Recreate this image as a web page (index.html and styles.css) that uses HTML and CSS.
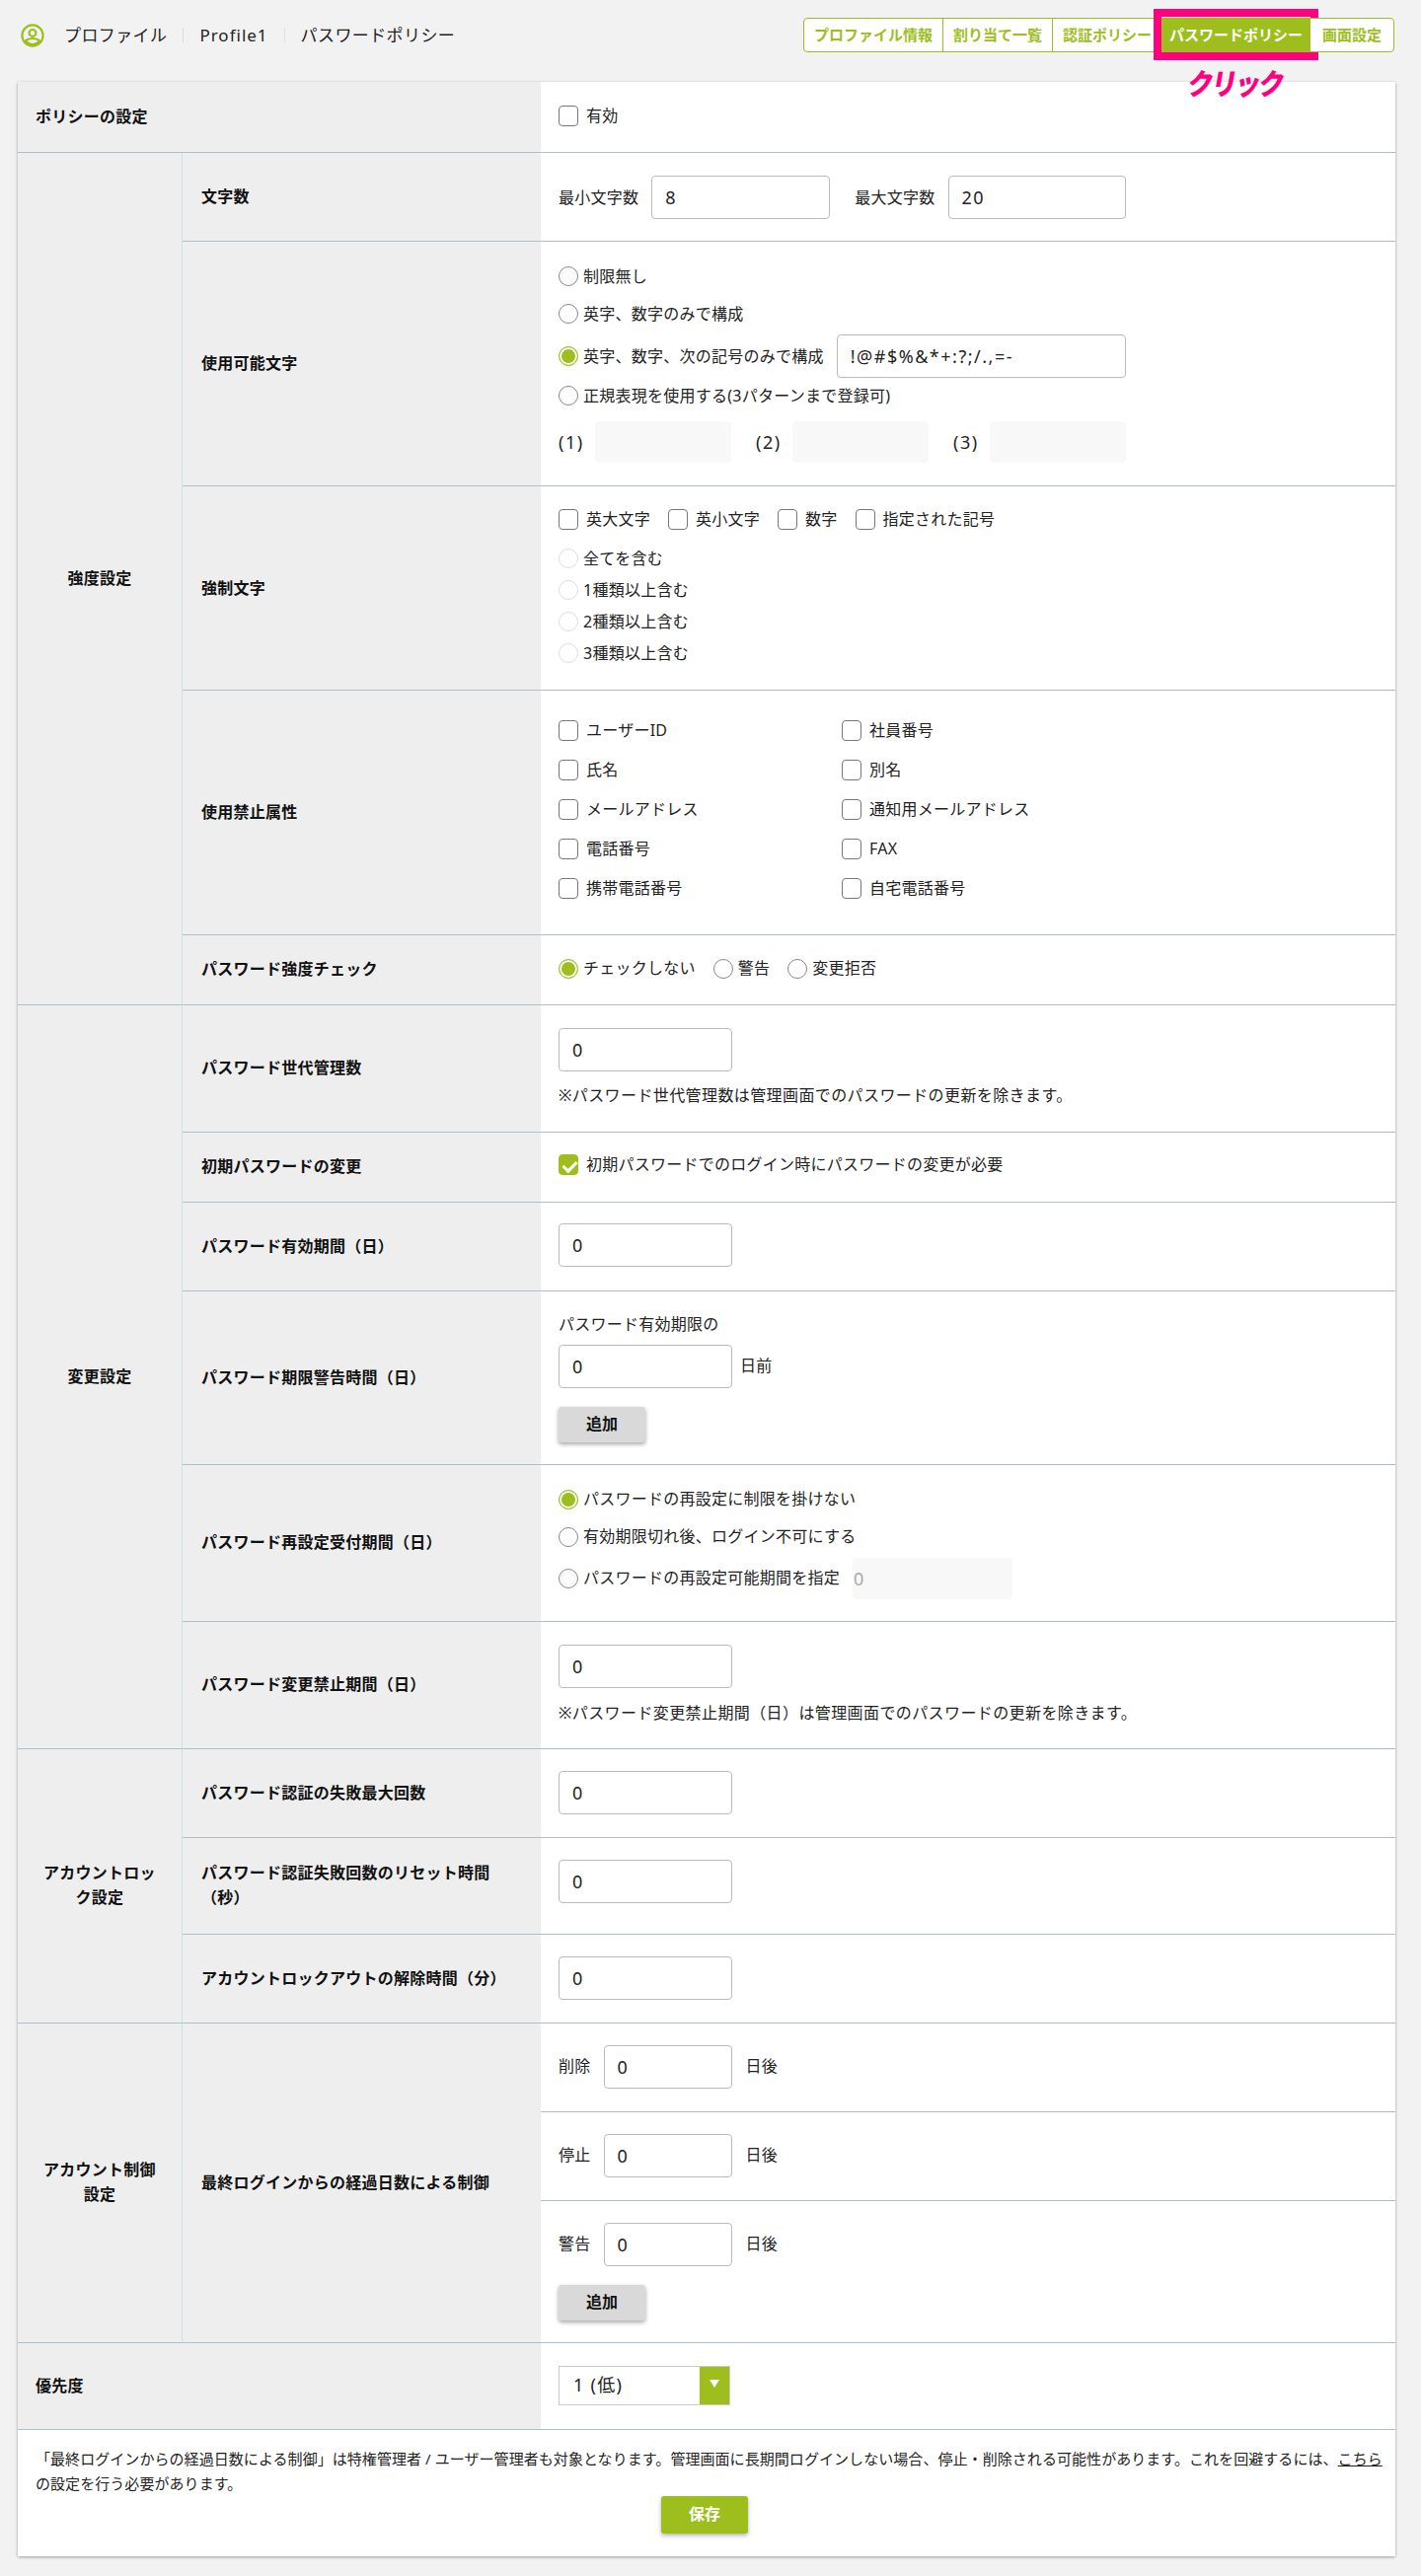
FILE: index.html
```html
<!DOCTYPE html>
<html lang="ja">
<head>
<meta charset="utf-8">
<title>パスワードポリシー</title>
<link rel="stylesheet" href="styles.css">
</head>
<body>
<header class="top">
  <div class="crumbs">
    <svg class="crumb-icon" viewBox="0 0 24 24" fill="none" stroke="#9dbe1d" stroke-width="2.2"><circle cx="12" cy="12" r="10.6"/><circle cx="12" cy="9.4" r="3.4"/><path d="M5 17.2c1.6-1.6 4-2.2 7-2.2s5.4.6 7 2.2c-1.6 2.3-4 3.800-7 3.800s-5.400-1.500-7-3.800z"/></svg>
    <span class="crumb">プロファイル</span>
    <span class="crumb crumb-sep crumb-latin">Profile1</span>
    <span class="crumb crumb-sep">パスワードポリシー</span>
  </div>
  <nav class="tabs">
    <a class="tab">プロファイル情報</a>
    <a class="tab">割り当て一覧</a>
    <a class="tab">認証ポリシー</a>
    <a class="tab tab-active">パスワードポリシー<span class="mark"></span><span class="mark-text">クリック</span></a>
    <a class="tab tab-last">画面設定</a>
  </nav>
</header>

<main class="card">
  <table class="form">
    <colgroup><col class="col-group"><col class="col-label"><col></colgroup>
    <tr>
      <th class="head" colspan="2">ポリシーの設定</th>
      <td class="p24-26"><label class="opt-check"><input type="checkbox"><span>有効</span></label></td>
    </tr>

    <tr>
      <th class="group" rowspan="5">強度設定</th>
      <th class="sub">文字数</th>
      <td class="p23-22">
        <div class="inline">
          <span>最小文字数</span><input class="in in-181 gap-left" value="8">
          <span class="gap-wide">最大文字数</span><input class="in in-180 gap-left" value="20">
        </div>
      </td>
    </tr>
    <tr>
      <th class="sub">使用可能文字</th>
      <td class="p16-23">
        <label class="opt-line"><input type="radio" name="c"><span>制限無し</span></label>
        <label class="opt-line"><input type="radio" name="c"><span>英字、数字のみで構成</span></label>
        <div class="opt-input">
          <label class="opt-radio"><input type="radio" name="c" checked><span>英字、数字、次の記号のみで構成</span></label>
          <input class="in in-293 push-13" value="!@#$%&amp;*+:?;/.,=-">
        </div>
        <label class="opt-line opt-short"><input type="radio" name="c"><span>正規表現を使用する(3パターンまで登録可)</span></label>
        <div class="regex">
          <span class="regex-no">(1)</span><input class="in in-off in-138" disabled>
          <span class="regex-no regex-next">(2)</span><input class="in in-off in-138" disabled>
          <span class="regex-no regex-next">(3)</span><input class="in in-off in-138" disabled>
        </div>
      </td>
    </tr>
    <tr>
      <th class="sub">強制文字</th>
      <td class="p23-21">
        <div class="check-row">
          <label class="opt-check"><input type="checkbox"><span>英大文字</span></label>
          <label class="opt-check"><input type="checkbox"><span>英小文字</span></label>
          <label class="opt-check"><input type="checkbox"><span>数字</span></label>
          <label class="opt-check"><input type="checkbox"><span>指定された記号</span></label>
        </div>
        <div class="disabled-list">
          <label class="opt-tight"><input type="radio" name="f" disabled><span>全てを含む</span></label>
          <label class="opt-tight"><input type="radio" name="f" disabled><span>1種類以上含む</span></label>
          <label class="opt-tight"><input type="radio" name="f" disabled><span>2種類以上含む</span></label>
          <label class="opt-tight"><input type="radio" name="f" disabled><span>3種類以上含む</span></label>
        </div>
      </td>
    </tr>
    <tr>
      <th class="sub">使用禁止属性</th>
      <td class="p20-26">
        <div class="attr-grid">
          <label class="opt-check"><input type="checkbox"><span>ユーザーID</span></label>
          <label class="opt-check"><input type="checkbox"><span>社員番号</span></label>
          <label class="opt-check"><input type="checkbox"><span>氏名</span></label>
          <label class="opt-check"><input type="checkbox"><span>別名</span></label>
          <label class="opt-check"><input type="checkbox"><span>メールアドレス</span></label>
          <label class="opt-check"><input type="checkbox"><span>通知用メールアドレス</span></label>
          <label class="opt-check"><input type="checkbox"><span>電話番号</span></label>
          <label class="opt-check"><input type="checkbox"><span>FAX</span></label>
          <label class="opt-check"><input type="checkbox"><span>携帯電話番号</span></label>
          <label class="opt-check"><input type="checkbox"><span>自宅電話番号</span></label>
        </div>
      </td>
    </tr>
    <tr>
      <th class="sub">パスワード強度チェック</th>
      <td class="p24-26">
        <div class="radio-row">
          <label class="opt-radio"><input type="radio" name="s" checked><span>チェックしない</span></label>
          <label class="opt-radio"><input type="radio" name="s"><span>警告</span></label>
          <label class="opt-radio"><input type="radio" name="s"><span>変更拒否</span></label>
        </div>
      </td>
    </tr>

    <tr>
      <th class="group" rowspan="6">変更設定</th>
      <th class="sub">パスワード世代管理数</th>
      <td class="p23-24">
        <input class="in in-176" value="0">
        <p class="note note-12">※パスワード世代管理数は管理画面でのパスワードの更新を除きます。</p>
      </td>
    </tr>
    <tr>
      <th class="sub">初期パスワードの変更</th>
      <td class="p22-27"><label class="opt-check"><input type="checkbox" checked><span>初期パスワードでのログイン時にパスワードの変更が必要</span></label></td>
    </tr>
    <tr>
      <th class="sub">パスワード有効期間（日）</th>
      <td class="p21-24"><input class="in in-176" value="0"></td>
    </tr>
    <tr>
      <th class="sub">パスワード期限警告時間（日）</th>
      <td class="p21-22">
        <p class="text">パスワード有効期限の</p>
        <div class="inline after-text">
          <input class="in in-176" value="0"><span class="unit-near">日前</span>
        </div>
        <button class="btn btn-grey" type="button">追加</button>
      </td>
    </tr>
    <tr>
      <th class="sub">パスワード再設定受付期間（日）</th>
      <td class="p16-22">
        <label class="opt-line"><input type="radio" name="r" checked><span>パスワードの再設定に制限を掛けない</span></label>
        <label class="opt-line"><input type="radio" name="r"><span>有効期限切れ後、ログイン不可にする</span></label>
        <div class="opt-input">
          <label class="opt-radio"><input type="radio" name="r"><span>パスワードの再設定可能期間を指定</span></label>
          <input class="in in-off in-162 push-13" value="0" disabled>
        </div>
      </td>
    </tr>
    <tr>
      <th class="sub">パスワード変更禁止期間（日）</th>
      <td class="p23-23">
        <input class="in in-176" value="0">
        <p class="note note-13">※パスワード変更禁止期間（日）は管理画面でのパスワードの更新を除きます。</p>
      </td>
    </tr>

    <tr>
      <th class="group" rowspan="3">アカウントロック設定</th>
      <th class="sub">パスワード認証の失敗最大回数</th>
      <td class="p22-23"><input class="in in-176" value="0"></td>
    </tr>
    <tr>
      <th class="sub">パスワード認証失敗回数のリセット時間（秒）</th>
      <td class="p22-31"><input class="in in-176" value="0"></td>
    </tr>
    <tr>
      <th class="sub">アカウントロックアウトの解除時間（分）</th>
      <td class="p22-23"><input class="in in-176" value="0"></td>
    </tr>

    <tr>
      <th class="group" rowspan="3">アカウント制御設定</th>
      <th class="sub" rowspan="3">最終ログインからの経過日数による制御</th>
      <td class="p22-23">
        <div class="inline"><span>削除</span><input class="in in-130 gap-13" value="0"><span class="unit">日後</span></div>
      </td>
    </tr>
    <tr>
      <td class="p22-23">
        <div class="inline"><span>停止</span><input class="in in-130 gap-13" value="0"><span class="unit">日後</span></div>
      </td>
    </tr>
    <tr>
      <td class="p22-22">
        <div class="inline"><span>警告</span><input class="in in-130 gap-13" value="0"><span class="unit">日後</span></div>
        <button class="btn btn-grey btn-after" type="button">追加</button>
      </td>
    </tr>

    <tr>
      <th class="head" colspan="2">優先度</th>
      <td class="p23-24">
        <div class="select-wrap">
          <select class="select"><option>1 (低)</option></select>
          <span class="select-arrow"></span>
        </div>
      </td>
    </tr>
  </table>

  <footer class="foot">
    <p class="foot-text">「最終ログインからの経過日数による制御」は特権管理者 / ユーザー管理者も対象となります。管理画面に長期間ログインしない場合、停止・削除される可能性があります。これを回避するには、<a class="link">こちら</a>の設定を行う必要があります。</p>
    <div class="save-row"><button class="btn btn-save" type="button">保存</button></div>
  </footer>
</main>
</body>
</html>
```

FILE: styles.css
```css
* { box-sizing: border-box; }

html, body { margin: 0; padding: 0; }

body {
  background: #f2f2f2;
  color: #222;
  font-family: "Noto Sans", "Noto Sans CJK JP", sans-serif;
  font-size: 16px;
  line-height: 25px;
  letter-spacing: .25px;
  padding-bottom: 19px;
}

p { margin: 0; }

/* header */
.top {
  display: flex;
  justify-content: space-between;
  align-items: flex-start;
  padding: 18px 27px 30px 21px;
}

.crumbs {
  display: flex;
  align-items: center;
  height: 35px;
}

.crumb-icon {
  width: 24px;
  height: 24px;
  margin-right: 20px;
}

.crumb {
  font-size: 17px;
  letter-spacing: .4px;
  color: #222;
}

.crumb-latin { letter-spacing: 1px; }

.crumb-sep {
  margin-left: 16px;
  padding-left: 16px;
  line-height: 15px;
  border-left: 1px solid #ddd;
}

.tabs { display: flex; }

.tab {
  position: relative;
  display: block;
  height: 35px;
  line-height: 33px;
  padding: 0 10px;
  margin-left: -1px;
  background: #fff;
  border: 1px solid #9dbe1d;
  color: #9dbe1d;
  font-size: 15px;
  font-weight: 700;
  letter-spacing: 0;
}

.tab:first-child { border-radius: 4px 0 0 4px; margin-left: 0; }

.tab-last {
  padding: 0 12px;
  border-radius: 0 4px 4px 0;
}

.tab-active {
  padding: 0 7px;
  background: #9dbe1d;
  color: #fff;
}

.mark {
  position: absolute;
  top: -10px;
  left: -9px;
  right: -9px;
  bottom: -9px;
  border: 8px solid #ff007f;
}

.mark-text {
  position: absolute;
  top: 47px;
  left: 26px;
  color: #ff007f;
  font-size: 26px;
  font-weight: 900;
  line-height: 36px;
  letter-spacing: -2px;
  white-space: nowrap;
  transform: skewX(-10deg) scaleY(1.15);
}

/* card and table */
.card {
  margin: 0 26px 0 18px;
  background: #fff;
  box-shadow: 0 1px 3px rgba(0, 0, 0, .35);
}

.form {
  width: 100%;
  table-layout: fixed;
  border-collapse: separate;
  border-spacing: 0;
}

.col-group { width: 167px; }
.col-label { width: 363px; }

.form th,
.form td { border-bottom: 1px solid #aebfc9; }

.form th {
  background: #eee;
  color: #111;
  font-weight: 700;
  text-align: left;
  vertical-align: middle;
}

.head { padding: 0 18px; }

.form .group {
  padding: 0 20px;
  text-align: center;
  border-right: 1px solid #cfdfe8;
}

.sub { padding: 0 18px 0 19px; }

.form td { padding-left: 18px; padding-right: 18px; vertical-align: top; }

.form .p16-22 { padding-top: 16px; padding-bottom: 22px; }
.form .p16-23 { padding-top: 16px; padding-bottom: 23px; }
.form .p20-26 { padding-top: 20px; padding-bottom: 26px; }
.form .p21-22 { padding-top: 21px; padding-bottom: 22px; }
.form .p21-24 { padding-top: 21px; padding-bottom: 24px; }
.form .p22-22 { padding-top: 22px; padding-bottom: 22px; }
.form .p22-23 { padding-top: 22px; padding-bottom: 23px; }
.form .p22-27 { padding-top: 22px; padding-bottom: 27px; }
.form .p22-31 { padding-top: 22px; padding-bottom: 31px; }
.form .p23-21 { padding-top: 23px; padding-bottom: 21px; }
.form .p23-22 { padding-top: 23px; padding-bottom: 22px; }
.form .p23-23 { padding-top: 23px; padding-bottom: 23px; }
.form .p23-24 { padding-top: 23px; padding-bottom: 24px; }
.form .p24-26 { padding-top: 24px; padding-bottom: 26px; }

/* inputs */
.in {
  display: block;
  height: 44px;
  padding: 0 13px;
  background: #fff;
  border: 1px solid #bbb;
  border-radius: 4px;
  color: #222;
  font: inherit;
  font-size: 18px;
  letter-spacing: 1.5px;
  outline: 0;
}

.in-130 { width: 130px; }
.in-138 { width: 138px; height: 42px; }
.in-162 { width: 162px; height: 42px; padding: 0; }
.in-176 { width: 176px; }
.in-180 { width: 180px; }
.in-181 { width: 181px; }
.in-293 { width: 293px; }

.in-off {
  background: #f8f8f8;
  border-color: #f8f8f8;
  color: #aaa;
}

.inline { display: flex; align-items: center; }
.gap-left { margin-left: 13px; }
.gap-wide { margin-left: 25px; }
.gap-13 { margin-left: 13px; }
.unit { margin-left: 14px; }
.unit-near { margin-left: 8px; }
.after-text { margin-top: 8px; }
.push-13 { margin-left: 13px; }

/* checks and radios */
input[type="checkbox"],
input[type="radio"] {
  appearance: none;
  flex: none;
  position: relative;
  margin: 0;
  width: 20px;
  background: #fff;
  border: 1px solid #777;
}

input[type="checkbox"] {
  height: 21px;
  border-radius: 4px;
}

input[type="checkbox"]:checked {
  background: #9dbe1d;
  border-color: #9dbe1d;
}

input[type="checkbox"]:checked::after {
  content: "";
  position: absolute;
  left: 6px;
  top: 3px;
  width: 6px;
  height: 11px;
  border: solid #fff;
  border-width: 0 3px 3px 0;
  transform: rotate(45deg);
}

input[type="radio"] {
  height: 20px;
  border-radius: 50%;
  border-color: #888;
}

input[type="radio"]:checked {
  border-color: #9dbe1d;
  background: #9dbe1d;
  box-shadow: inset 0 0 0 2px #fff;
}

input[type="radio"]:disabled { border-color: #ddd; }

.opt-check,
.opt-radio,
.opt-line,
.opt-tight {
  display: flex;
  align-items: center;
}

.opt-check { gap: 8px; }
.opt-radio,
.opt-line,
.opt-tight { gap: 5px; }

.opt-check { height: 21px; }
.opt-radio { height: 20px; }
.opt-line { height: 38px; }
.opt-short { height: 36px; }
.opt-tight { height: 32px; }

.opt-input {
  display: flex;
  align-items: center;
  margin-top: 2px;
}

.regex {
  display: flex;
  align-items: center;
  margin-top: 8px;
  font-size: 18px;
  letter-spacing: 1.5px;
}

.regex-no { width: 37px; }
.regex-next { margin-left: 25px; }

.check-row { display: flex; gap: 18px; }

.disabled-list { margin-top: 13px; }

.attr-grid {
  display: grid;
  grid-template-columns: 287px 1fr;
  grid-auto-rows: 40.2px;
  align-items: center;
}

.radio-row { display: flex; gap: 18px; }

.note { line-height: 25px; letter-spacing: .4px; }
.note-12 { margin-top: 12px; }
.note-13 { margin-top: 13px; }

/* buttons */
.btn {
  display: block;
  width: 88px;
  padding: 0;
  border: 0;
  border-radius: 3px;
  font: inherit;
  font-weight: 700;
}

.btn-grey {
  height: 36px;
  margin-top: 19px;
  background: #d9d9d9;
  color: #111;
  box-shadow: 0 2px 4px rgba(0, 0, 0, .35);
}

.btn-save {
  height: 38px;
  background: #9dbe1d;
  color: #fff;
  box-shadow: 0 2px 4px rgba(0, 0, 0, .3);
}

/* select */
.select-wrap {
  position: relative;
  width: 174px;
  height: 40px;
}

.select {
  appearance: none;
  display: block;
  width: 100%;
  height: 100%;
  padding: 0 14px;
  background: #fff;
  border: 1px solid #ccc;
  border-radius: 0;
  color: #222;
  font: inherit;
  font-size: 18px;
  letter-spacing: 1.3px;
}

.select-arrow {
  position: absolute;
  top: 0;
  right: 0;
  width: 31px;
  height: 40px;
  background: #9dbe1d;
  border: solid #ccc;
  border-width: 1px 1px 1px 0;
}

.select-arrow::after {
  content: "";
  position: absolute;
  left: 10px;
  top: 13px;
  border-style: solid;
  border-width: 8px 5px 0;
  border-color: #fff transparent transparent;
}

/* footer */
.foot { padding: 17px 12px 23px 18px; }
.foot-text { font-size: 15px; letter-spacing: .06px; }
.link { text-decoration: underline; color: #222; }
.save-row { display: flex; justify-content: center; padding-right: 10px; }
```
